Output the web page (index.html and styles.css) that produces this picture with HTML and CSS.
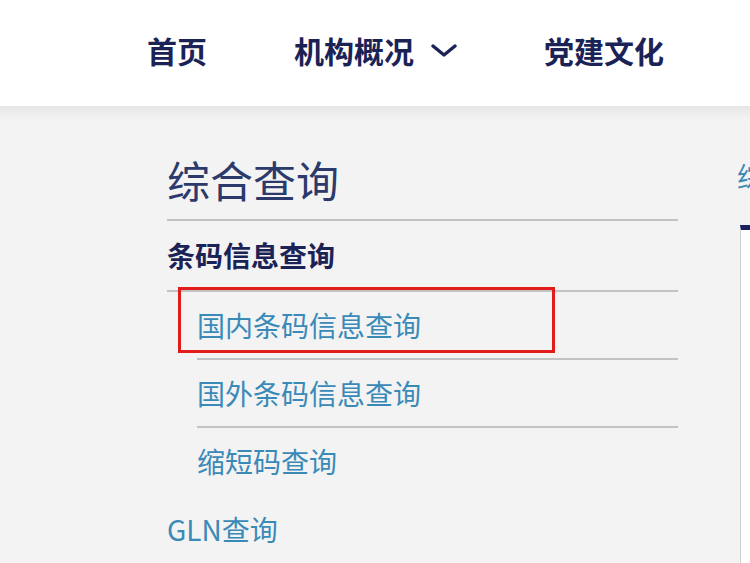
FILE: index.html
```html
<!DOCTYPE html>
<html lang="zh-CN">
<head>
<meta charset="utf-8">
<title>综合查询</title>
<link rel="stylesheet" href="styles.css">
</head>
<body>
<header class="header">
  <nav class="nav">
    <a class="nav-item" href="#">首页</a>
    <a class="nav-item nav-drop" href="#">机构概况
      <svg class="chev" width="26" height="14" viewBox="0 0 26 14"><path d="M2 2 L13 11 L24 2" fill="none" stroke="#1b2356" stroke-width="3.4" stroke-linecap="round" stroke-linejoin="round"/></svg>
    </a>
    <a class="nav-item" href="#">党建文化</a>
  </nav>
</header>
<main class="main">
  <aside class="side">
    <h1 class="side-title">综合查询</h1>
    <div class="group-title">条码信息查询</div>
    <ul class="sub">
      <li class="sub-item marked">国内条码信息查询<span class="mark"></span></li>
      <li class="sub-item">国外条码信息查询</li>
      <li class="sub-item last">缩短码查询</li>
    </ul>
    <div class="plain-item">GLN查询</div>
  </aside>
  <section class="content">
    <div class="crumb">综合查询</div>
    <div class="panel"></div>
  </section>
</main>
</body>
</html>
```
FILE: styles.css
```css
* { box-sizing: border-box; }
html, body {
  margin: 0;
  padding: 0;
  width: 750px;
  height: 563px;
  overflow: hidden;
  font-family: "Noto Sans CJK SC", "Microsoft YaHei", sans-serif;
  background: #f3f3f3;
}
.header {
  height: 106px;
  background: #ffffff;
}
.nav {
  display: flex;
  align-items: center;
  height: 100px;
  padding-left: 147px;
}
.nav-item {
  font-size: 30px;
  font-weight: 700;
  color: #1b2356;
  text-decoration: none;
  line-height: 40px;
  display: flex;
  align-items: center;
  margin-right: 87px;
  white-space: nowrap;
}
.nav-drop .chev { margin-left: 17px; margin-top: 2px; }
.main {
  display: flex;
  align-items: flex-start;
  padding-left: 167px;
  background: linear-gradient(#e6e6e6, #f3f3f3 14px);
  height: 457px;
}
.side {
  width: 511px;
  flex: none;
}
.side-title {
  margin: 0;
  padding-top: 44px;
  padding-bottom: 11px;
  font-size: 43px;
  font-weight: 400;
  line-height: 58px;
  color: #2b3a6b;
  border-bottom: 2px solid #c2c2c2;
}
.group-title {
  font-size: 28px;
  font-weight: 700;
  color: #1b2356;
  line-height: 69px;
  border-bottom: 2px solid #c2c2c2;
}
.sub {
  list-style: none;
  margin: 0;
  padding: 0;
}
.sub-item {
  position: relative;
  margin-left: 30px;
  font-size: 28px;
  color: #3a8ab8;
  line-height: 66px;
  border-bottom: 2px solid #c2c2c2;
}
.sub-item.last { border-bottom: 0; }
.mark {
  position: absolute;
  left: -19px;
  top: -5px;
  width: 377px;
  height: 66px;
  border: 3px solid #e21b1b;
}
.plain-item {
  font-size: 28px;
  color: #3a8ab8;
  line-height: 70px;
}
.content {
  margin-left: 59px;
  flex: 1;
  overflow: hidden;
}
.crumb {
  padding-top: 50px;
  font-size: 28px;
  color: #3a8ab8;
  line-height: 40px;
  white-space: nowrap;
}
.panel {
  margin-top: 29px;
  margin-left: 3px;
  height: 340px;
  width: 200px;
  background: #ffffff;
  border-top: 5px solid #1a1f5e;
  border-left: 1px solid #cfcfcf;
}
```
